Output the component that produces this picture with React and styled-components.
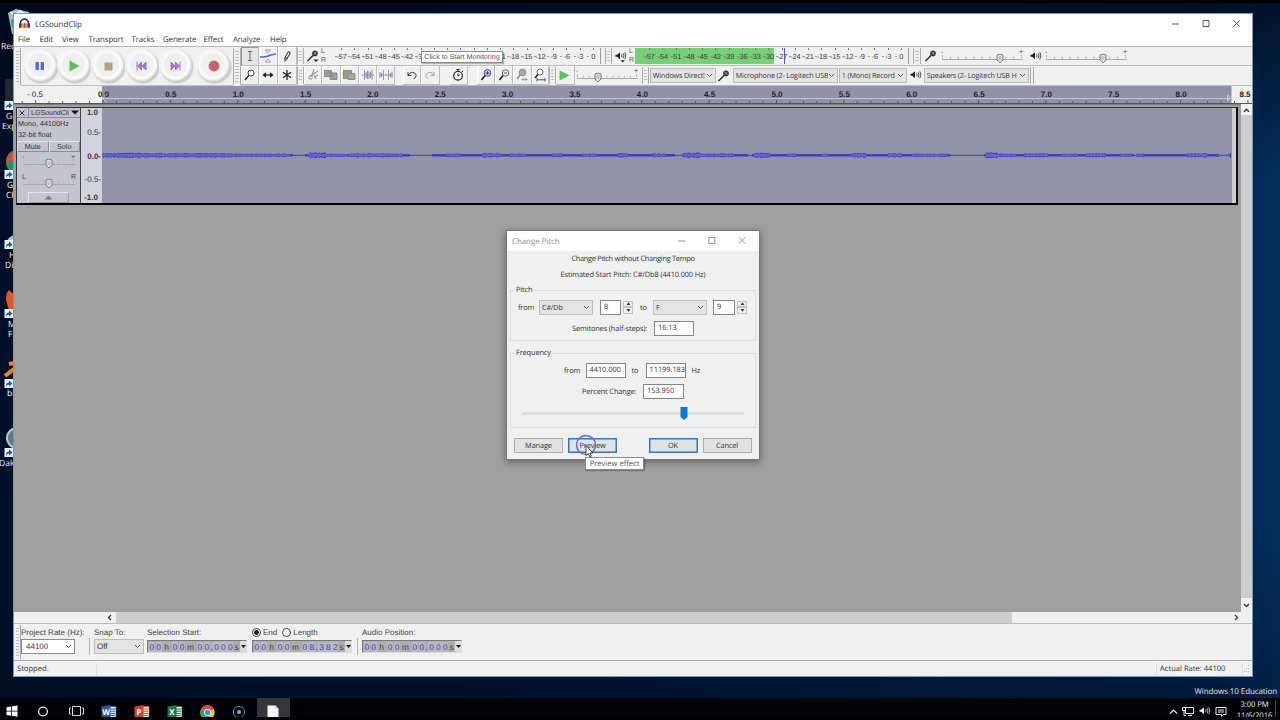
import React from 'react';
import styled, { createGlobalStyle } from 'styled-components';

const GlobalStyle = createGlobalStyle`
	* {
		box-sizing: border-box;
	}

	body {
		margin: 0;
		overflow: hidden;
		background: #000;
		font-family: 'Liberation Sans', Arial, sans-serif;
		font-size: 8px;
		color: #333;
		text-rendering: geometricPrecision;
	}

	svg {
		display: block;
		flex: none;
	}
`;

const ui = `'Open Sans', 'Noto Sans', sans-serif`;

const Desktop = styled.div`
	position: relative;
	width: 1280px;
	height: 720px;
	overflow: hidden;
	padding-top: 3px;
	background: #000;
	display: flex;
	flex-direction: column;
	font-family: ${ui};
`;

const Wallpaper = styled.div`
	flex: 1;
	background: linear-gradient(to bottom, rgba(0, 8, 22, 0.75), transparent 25%, transparent 75%, rgba(0, 8, 22, 0.35)),
		linear-gradient(to right, #001029 0%, #001736 40%, #00224c 95%, #04305f 100%);
`;

const Shortcut = styled.div`
	position: absolute;
	left: ${props => props.$x || 4}px;
	top: ${props => props.$y}px;
	width: 40px;
	color: #f0f0f0;
	font-size: 8.5px;
	line-height: 10px;
	text-align: left;
	white-space: pre;
`;

const Window = styled.div`
	position: absolute;
	left: 13px;
	top: 13px;
	width: 1240px;
	height: 664px;
	display: flex;
	flex-direction: column;
	border: 1px solid #6f9fb8;
	background: #f0f0f0;
`;

const TitleBar = styled.div`
	display: flex;
	align-items: center;
	height: 19px;
	padding-left: 5px;
	background: #fff;
	font-size: 8px;
	color: #333;

	span {
		flex: 1;
		margin-left: 5px;
		padding-top: 1px;
		letter-spacing: -0.1px;
	}
`;

const MenuBar = styled.div`
	display: flex;
	align-items: center;
	height: 14px;
	padding-top: 1px;
	background: #fff;
	font-size: 7.8px;
	letter-spacing: -0.08px;
	color: #333;
	border-bottom: 1px solid #b4b4b4;
`;

const MenuItem = styled.span`
	flex: none;
	width: ${props => props.$w}px;
	padding-left: 4px;
	white-space: nowrap;
`;

const Toolbars = styled.div`
	display: flex;
	height: 39px;
	font-family: 'Liberation Sans', Arial, sans-serif;
`;

const Grip = styled.div`
	flex: none;
	width: ${props => props.$w || 7}px;
	margin: 1px 0;
	border-left: 1px solid ${props => (props.$first ? '#f0f0f0' : '#aaa')};
	border-right: 1px solid #aaa;
	background: repeating-linear-gradient(to bottom, #bbb 0 1px, #f2f2f2 1px 3px) content-box;
	padding: 3px 1px;
`;

const Transport = styled.div`
	display: flex;
	align-items: center;
	width: 212px;
	padding-left: 3px;
	gap: 1.3px;
	border-bottom: 1px solid #c2c2c2;
`;

const RoundButton = styled.div`
	display: flex;
	align-items: center;
	justify-content: center;
	flex: none;
	width: 32.6px;
	height: 32.6px;
	margin-left: ${props => props.$ml || 0}px;
	border-radius: 50%;
	background: radial-gradient(circle at 48% 46%, #efefef 0 42%, #fbfbfb 56%, #eee 63%, #c9c9c9 70%, #eee 78%);
	box-shadow: 1px 1px 2px #b8b8b8, -1px -1px 1px #fafafa;
`;

const ToolGrid = styled.div`
	display: grid;
	grid-template-columns: repeat(3, 1fr);
	width: 56px;
	border-bottom: 1px solid #c2c2c2;
`;

const Tool = styled.div`
	display: flex;
	align-items: center;
	justify-content: center;
	flex: none;
	width: ${props => props.$w || 18.3}px;
	margin-left: ${props => props.$ml || 0}px;
	border-right: 1px solid #bdbdbd;
	border-bottom: 1px solid #bdbdbd;
	background: ${props => (props.$on ? '#e4e4e4' : '#f0f0f0')};
	box-shadow: inset 1px 1px 0 ${props => (props.$on ? '#999' : '#fff')};
`;

const Docks = styled.div`
	flex: 1;
	display: flex;
	flex-direction: column;
`;

const Dock = styled.div`
	position: relative;
	display: flex;
	height: ${props => props.$h}px;
	border-bottom: 1px solid #bcbcbc;
`;

const Slot = styled.div`
	display: flex;
	align-items: center;
	justify-content: center;
	flex: none;
	width: ${props => props.$w}px;
`;

const Channels = styled.div`
	width: 6px;
	padding-top: 1px;
	font-size: 7px;
	line-height: 8.5px;
	color: #555;
`;

const Scale = styled.div`
	display: flex;
	flex: none;
	width: 274px;
	height: 16px;
	margin-top: 1px;
	padding-left: 8px;
	background: linear-gradient(to right, #74d274 ${props => props.$level || 0}px, transparent 0);
	border-right: 1px solid #9a9aa8;
`;

const Mark = styled.span`
	display: flex;
	align-items: center;
	justify-content: center;
	width: 13.42px;
	padding-top: 1px;
	font-size: 7.4px;
	letter-spacing: -0.1px;
	color: #3c3c3c;
	white-space: nowrap;
	background: linear-gradient(#777, #777) 50% 0 / 1px 2px no-repeat,
		linear-gradient(#999, #999) 0 8px / 2px 1px no-repeat;
`;

const PeakLine = styled.i`
	position: absolute;
	left: 487px;
	top: 1px;
	width: 1px;
	height: 16px;
	background: #5554c4;
`;

const Hint = styled.div`
	position: absolute;
	left: ${props => props.$x}px;
	top: ${props => props.$y}px;
	width: ${props => props.$w}px;
	height: ${props => props.$h}px;
	display: flex;
	align-items: center;
	justify-content: center;
	border: 1px solid #8a8a8a;
	background: #fff;
	color: #555;
	white-space: nowrap;
	font-size: ${props => props.$size || 7.1}px;
	font-family: ${props => (props.$ui ? ui : 'inherit')};
	box-shadow: 1px 1px 1px rgba(0, 0, 0, 0.25);
`;

const Combo = styled.div`
	display: flex;
	align-items: center;
	justify-content: space-between;
	flex: none;
	width: ${props => props.$w}px;
	height: ${props => props.$h || 15}px;
	margin-left: ${props => props.$ml || 0}px;
	padding: 0 2px 0 ${props => props.$pad || 2}px;
	border: 1px solid ${props => (props.$white ? '#8c8c8c' : '#bcbcbc')};
	background: ${props => (props.$white ? '#fff' : '#e3e3e3')};
	font-family: ${props => (props.$plain ? 'inherit' : ui)};
	font-size: ${props => props.$size || 7.2}px;
	letter-spacing: ${props => (props.$plain ? 0 : -0.15)}px;
	white-space: nowrap;
	color: #333;

	span {
		overflow: hidden;
		padding-top: ${props => (props.$plain ? 0 : 1)}px;
	}
`;

const Devices = styled.div`
	display: flex;
	align-items: center;
	padding-left: 1px;
`;

const Ruler = styled.div`
	height: 18px;
	background: #efefef;
	border-bottom: 1px solid #555;
`;

const Workspace = styled.div`
	display: flex;
	height: 508px;
	background: #9f9f9f;
`;

const Canvas = styled.div`
	flex: 1;
	padding: 2px 3px 0 2px;
	border-top: 1px solid #808080;
`;

const Track = styled.div`
	display: flex;
	height: 98px;
	border: 1px solid #333;
	border-right: 2px solid #111;
	border-bottom: 2px solid #000;
	background: #cfcfd3;
	font-family: 'Liberation Sans', Arial, sans-serif;
`;

const TrackPanel = styled.div`
	width: 64px;
	background: #c4c4d0;
	border-right: 1px solid #444;
	display: flex;
	flex-direction: column;
	color: #333;
	font-size: 7.2px;
`;

const TrackHead = styled.div`
	display: flex;
	align-items: center;
	height: 10.5px;
	border-bottom: 1px solid #8a8a98;

	span {
		flex: 1;
		padding-left: 2px;
		margin-left: 2px;
		border-left: 1px solid #8a8a98;
		letter-spacing: -0.1px;
	}
`;

const TrackInfo = styled.div`
	height: 22.5px;
	padding: 1px 0 0 1px;
	line-height: 10.7px;
`;

const TrackButtons = styled.div`
	display: grid;
	grid-template-columns: 1fr 1fr;
	height: 10.5px;

	span {
		display: flex;
		align-items: center;
		justify-content: center;
		border: 1px solid;
		border-color: #e4e4ee #8a8a98 #8a8a98 #e4e4ee;
	}
`;

const TrackSliders = styled.div`
	padding: 2px 0 0 5px;
`;

const Collapse = styled.div`
	display: flex;
	align-items: center;
	justify-content: center;
	width: 41px;
	height: 11px;
	margin: 0 auto;
	border: 1px solid;
	border-color: #e4e4ee #9a9aa8 #9a9aa8 #e4e4ee;
`;

const VerticalRuler = styled.div`
	display: flex;
	flex-direction: column;
	justify-content: space-between;
	align-items: flex-end;
	width: 21px;
	padding: 0 1px 1px 0;
	background: #d3d3dd;
	font-size: 8px;
	line-height: 9px;
	color: #333;

	b:first-child,
	b:last-child {
		margin-right: 3px;
	}

	span:nth-child(2) {
		margin-top: -4px;
	}

	span:nth-child(4) {
		margin-bottom: -6px;
	}
`;

const Wave = styled.div`
	width: 1130px;
	background: #9292aa;
`;

const VScroll = styled.div`
	width: 11px;
	display: flex;
	flex-direction: column;
	align-items: center;
	justify-content: space-between;
	background: linear-gradient(#cdcdcd, #cdcdcd) 0 11px / 11px 483px no-repeat #f0f0f0;
	padding: 4px 0;
`;

const HScroll = styled.div`
	display: flex;
	align-items: center;
	height: 11px;
	padding-left: 93px;
	background: #f0f0f0;
`;

const Thumb = styled.div`
	width: 896px;
	height: 11px;
	margin: 0 222px 0 4px;
	background: #cdcdcd;
`;

const SelectionBar = styled.div`
	display: flex;
	height: 38px;
	border-top: 1px solid #bbb;
	border-bottom: 1px solid #aaa;
	font-family: 'Liberation Sans', Arial, sans-serif;
	font-size: 8px;
`;

const Field = styled.div`
	flex: none;
	width: ${props => props.$w}px;
	margin-left: ${props => props.$ml || 0}px;
	padding-top: 2px;
`;

const FieldLabel = styled.div`
	display: flex;
	align-items: center;
	height: 13px;
	white-space: nowrap;
	color: #444;
`;

const Divider = styled.div`
	width: 1px;
	height: 17px;
	margin: 14px 0 0 ${props => props.$ml}px;
	background: #b4b4b4;
`;

const Radio = styled.i`
	flex: none;
	width: 9px;
	height: 9px;
	margin: 0 2px 0 ${props => props.$ml || 0}px;
	border: 1px solid #444;
	border-radius: 50%;
	background: ${props => (props.$on ? 'radial-gradient(#222 0 2px, #fff 2.8px)' : '#fff')};
`;

const TimeBox = styled.div`
	display: flex;
	align-items: center;
	height: 13px;
	margin-top: 1px;
	border: 1px solid;
	border-color: #777 #ddd #ddd #777;
	background: #adadb0;
	font-size: 8.4px;
	color: #444;

	b {
		flex: none;
		width: 6.2px;
		margin-left: 0.7px;
		height: 10px;
		line-height: 11px;
		background: #b9b9c0;
		color: #3a36c8;
		text-align: center;
		font-weight: 400;
	}

	em {
		width: 3.4px;
		text-align: center;
		color: #3a36c8;
		font-style: normal;
	}
`;

const TimeUnit = styled.span`
	flex: none;
	width: ${props => props.$w}px;
	text-align: center;
`;

const TimeArrow = styled.div`
	display: flex;
	align-items: center;
	justify-content: center;
	flex: none;
	width: 6px;
	height: 11px;
	margin-left: auto;
	background: #ddd;
`;

const StatusBar = styled.div`
	display: flex;
	align-items: center;
	flex: 1;
	font-size: 7.6px;
	padding-left: 3px;
`;

const StatusCell = styled.div`
	width: ${props => props.$w}px;
	height: 12px;
	line-height: 13px;
	padding-left: ${props => props.$pad || 0}px;
	border-right: 1px solid #ddd;
`;

const Dialog = styled.div`
	position: absolute;
	left: 506px;
	top: 230px;
	width: 254px;
	height: 230px;
	border: 1px solid #777;
	background: #f0f0f0;
	box-shadow: 0 2px 7px rgba(0, 0, 0, 0.4);
	font-size: 7.4px;
	letter-spacing: -0.13px;
	color: #333;
`;

const DialogTitle = styled.div`
	display: flex;
	align-items: center;
	height: 20px;
	padding-left: 5px;
	background: #fff;
	color: #8c8c8c;
	font-size: 8px;
	letter-spacing: -0.1px;

	span {
		flex: 1;
	}
`;

const DialogIntro = styled.div`
	padding-top: 1px;
	text-align: center;
	line-height: 15.5px;
	white-space: nowrap;
`;

const DialogText = styled.div`
	height: 15.5px;
	letter-spacing: ${props => (props.$tight ? -0.29 : -0.13)}px;
`;

const Group = styled.div`
	height: ${props => props.$h}px;
	margin: ${props => props.$mt}px 3px 0;
	border: 1px solid #dcdcdc;
`;

const Legend = styled.div`
	width: max-content;
	height: 10px;
	margin: -6px 0 0 3px;
	padding: 0 2px;
	line-height: 11px;
	background: #f0f0f0;
`;

const Row = styled.div`
	display: flex;
	align-items: center;
	height: 16px;
	margin-top: ${props => props.$mt || 0}px;
	padding-left: ${props => props.$pl || 0}px;
`;

const Label = styled.span`
	flex: none;
	width: ${props => props.$w}px;
	padding-top: 1px;
	white-space: nowrap;
`;

const Input = styled.div`
	flex: none;
	width: ${props => props.$w}px;
	height: 15px;
	padding-left: 3px;
	line-height: 12px;
	border: 1px solid #858585;
	background: #fff;
	overflow: hidden;
	white-space: nowrap;
	letter-spacing: -0.03px;
`;

const Stepper = styled.div`
	display: grid;
	grid-template-rows: 1fr 1fr;
	flex: none;
	width: 10px;
	height: 13px;
	margin: 0 ${props => props.$mr || 0}px 0 2px;

	span {
		display: flex;
		align-items: center;
		justify-content: center;
		border: 1px solid #c2c2c2;
	}
`;

const PitchSlider = styled.div`
	display: flex;
	align-items: center;
	height: 14px;
	margin: 7px 11px 0;
	padding-left: 158px;
	background: linear-gradient(#dedede, #dedede) 0 6px / 100% 3px no-repeat;
`;

const Actions = styled.div`
	display: flex;
	margin: 10px 0 0 7px;
`;

const Button = styled.div`
	display: flex;
	align-items: center;
	justify-content: center;
	width: 49px;
	height: 15px;
	margin-right: ${props => props.$mr || 0}px;
	border: 1px solid ${props => (props.$focus ? '#2b7ac4' : '#adadad')};
	box-shadow: inset 0 0 0 0.5px ${props => (props.$focus ? '#2b7ac4' : 'transparent')};
	background: #e2e2e2;
	font-size: 7.4px;
`;

const Pointer = styled.svg`
	position: absolute;
	left: 574px;
	top: 433px;
`;

const Watermark = styled.div`
	position: absolute;
	right: 3px;
	top: 686px;
	color: #e6e6e6;
	font-size: 8px;
	letter-spacing: -0.1px;
	line-height: 12px;
`;

const Taskbar = styled.div`
	display: flex;
	align-items: center;
	height: 19px;
	margin-bottom: 3px;
	background: #010307;
	overflow: hidden;
`;

const TaskItem = styled.div`
	display: flex;
	justify-content: center;
	flex: none;
	width: ${props => props.$w || 32.8}px;
	height: 19px;
	padding-top: 6.5px;
	background: ${props => (props.$on ? '#33363b' : 'none')};
`;

const Tray = styled.div`
	display: flex;
	align-items: center;
	gap: 4px;
	margin-left: auto;
	padding-top: 8px;
`;

const Clock = styled.div`
	width: 42px;
	height: 19px;
	margin: -4px 4px 0 3px;
	border-right: 1px solid #444;
	overflow: hidden;
	color: #eee;
	text-align: center;
	font-size: 7.7px;
	letter-spacing: -0.1px;
	line-height: 11px;
	white-space: nowrap;
`;

const Chevron = ({ d = 'M1 1l2.5 2.5L6 1', w = 7, h = 5, color = '#555', sw = 1 }) => (
	<svg width={w} height={h} fill="none" stroke={color} strokeWidth={sw}>
		<path d={d} />
	</svg>
);

const Mic = ({ arrow }) => (
	<svg width="14" height="14" viewBox="0 0 14 14">
		<path d="M1.5 12l6-6" stroke="#333" strokeWidth="1.6" />
		<circle cx="9" cy="4.4" r="2.8" fill="#333" />
		<path d="M7.6 3.2l3 2.6M8 5.5l2.5-2.8" stroke="#ccc" strokeWidth="0.7" />
		{arrow && <path d="M7.5 10.5h5L10 13z" fill="#222" />}
	</svg>
);

const Speaker = ({ arrow, color = '#222' }) => (
	<svg width="13" height="13" viewBox="0 0 13 13" fill="none" stroke={color}>
		<path d="M1.5 4.8h1.6L6 2.3v7L3.1 6.8H1.5z" fill={color} stroke="none" />
		<path d="M7.5 4.3q1 1.5 0 3M9.2 3.3q1.6 2.5 0 5M10.8 2.3q2.2 3.5 0 7" strokeWidth="0.8" />
		{arrow && <path d="M6.5 10.3h4.4L8.7 12.6z" fill="#222" stroke="none" />}
	</svg>
);

const Slider = ({ width, value, h = 17, left = '-', right = '+' }) => (
	<svg width={width + 2} height={h} fontSize="7" fill="#444">
		{Array.from({ length: 11 }, (_, i) => (
			<path key={i} d={`M${1.5 + (i * (width - 3)) / 10} ${i % 10 ? 8.5 : 7}v3`} stroke="#bbb" />
		))}
		<path d={`M1 11.5H${width}`} stroke="#aaa" />
		<text x="0" y="6">{left}</text>
		<text x={width - 4} y="6">{right}</text>
		<path
			d={`M${value - 3} 7q3-1.8 6 0v5l-3 3-3-3z`}
			fill="#dcdcea"
			stroke="#666"
			strokeWidth="0.8"
		/>
		<path d={`M${value - 1.5} 9h3M${value - 1.5} 11h3`} stroke="#999" strokeWidth="0.7" />
	</svg>
);

const icons = {
	ibeam: <path d="M5 2.5h4M7 2.5v9M5 11.5h4" stroke="#666" />,
	envelope: (
		<>
			<path d="M4.5 1h5L7 4.2zM4.5 13h5L7 9.8z" strokeWidth="0.6" stroke="#777" />
			<path d="M-1 8q6 0 8-1t8-2" stroke="#5a66d8" strokeWidth="1.7" />
		</>
	),
	pencil: <path d="M5 11.5V8.5l3.4-6 2 1.2-3.4 6zM5.5 8.5l2 1M5 11.5v1" />,
	zoom: (
		<>
			<circle cx="8" cy="5" r="3" fill="#fafafa" strokeWidth="0.8" />
			<path d="M5.8 7.4L2 12" strokeWidth="1.4" />
		</>
	),
	shift: (
		<>
			<path d="M3 7h8" strokeWidth="1.3" />
			<path d="M5 4.2L1.4 7 5 9.8zM9 4.2L12.6 7 9 9.8z" fill="#222" stroke="none" />
		</>
	),
	multi: <path d="M7 2v10M3 4.3l8 5.4M3 9.7l8-5.4" strokeWidth="1.3" />,
	cut: (
		<g stroke="#888">
			<path d="M8 1L6 8M12 3L4 8" />
			<circle cx="4.5" cy="9.5" r="1.7" />
			<path d="M8 7l2 4M9 9l3-2" />
		</g>
	),
	copy: <path d="M0.5 2.5h7v6h-7zM6 5h7v6.5H6z" fill="#9c9ca4" stroke="#888" />,
	paste: (
		<>
			<path d="M1.5 2.5h8v8h-8z" fill="#9c9c84" stroke="#888870" />
			<path d="M6 5.5h7v6H6z" fill="#a8a8b0" stroke="#888" />
		</>
	),
	trim: (
		<g stroke="#8a8ab4">
			<path d="M1 7h12M5 4v6M6.5 3v8M8 3v8M9.5 4v6" />
			<path d="M3.5 2v10M11 2v10" stroke="#999" />
		</g>
	),
	silence: (
		<g stroke="#8a8ab4">
			<path d="M1 4v6M2.5 5v4M5 7h4M11.5 5v4M13 4v6M0 7h4M10 7h4" />
			<path d="M4.5 2v10M9.5 2v10" stroke="#999" />
		</g>
	),
	undo: <path d="M3 4v3.5h3.5M3.2 7.2Q6 3 9.5 5T9 11" strokeWidth="0.9" />,
	redo: <path d="M11 4v3.5H7.5M10.8 7.2Q8 3 4.5 5T5 11" stroke="#999" strokeWidth="0.9" />,
	timer: (
		<>
			<circle cx="7" cy="7.8" r="4.3" fill="#fff" strokeWidth="1.2" />
			<path d="M7 5.3v2.6l1.8-1M5.5 1.5h3M7 1.5v2M11 3l1 1" />
		</>
	),
	zoomIn: (
		<>
			<circle cx="8.5" cy="5" r="3.4" fill="#c8c8e8" strokeWidth="0.7" />
			<path d="M6.7 5h3.6M8.5 3.2v3.6" stroke="#3333aa" />
			<path d="M6 7.4L2.5 12" strokeWidth="1.6" />
		</>
	),
	zoomOut: (
		<>
			<circle cx="8.5" cy="5" r="3.2" fill="#fff" strokeWidth="0.7" />
			<path d="M6.7 5h3.6" stroke="#555" />
			<path d="M6 7.4L2.5 12" strokeWidth="1.6" />
		</>
	),
	zoomSel: (
		<g stroke="#8a8a8a">
			<circle cx="7.5" cy="4.5" r="3.3" fill="#aaa" />
			<path d="M5 7L2 11" strokeWidth="1.6" />
			<path d="M6.5 11.5h6M8 10v3M11 10v3" strokeWidth="0.8" />
		</g>
	),
	zoomFit: (
		<>
			<circle cx="7" cy="4" r="3" fill="#fff" strokeWidth="0.7" />
			<path d="M4.8 6.4L2 10" strokeWidth="1.6" />
			<path d="M4 11.8h8M4 10v3.5M12 10v3.5" stroke="#4a4a88" />
		</>
	)
};

const Icon = ({ name }) => (
	<svg width="14" height="14" viewBox="0 0 14 14" fill="none" stroke="#222" overflow="visible">
		{icons[name]}
	</svg>
);

const WindowControls = ({ color = '#444', gap = 26, right = 12 }) => (
	<svg width={gap * 2 + 18 + right} height="12" fill="none" stroke={color} strokeWidth="0.9">
		<path d="M4 6h7" />
		<path d={`M${gap + 4.5} 2.5h6v6h-6z`} />
		<path d={`M${gap * 2 + 4.5} 2.3l6.3 6.3M${gap * 2 + 10.8} 2.3l-6.3 6.3`} />
	</svg>
);

const marks = Array.from({ length: 20 }, (_, i) => (i === 19 ? '0' : `-${57 - i * 3}`));

const Meter = ({ level }) => (
	<Scale $level={level}>
		{marks.map(mark => (
			<Mark key={mark}>{mark}</Mark>
		))}
	</Scale>
);

const second = 134.7;

const TimeRuler = () => (
	<svg width="1238" height="17" fontFamily="Liberation Sans" fontSize="8" fill="#222" fontWeight="bold">
		<rect x="88" width="1129.5" height="17" fill="#9191aa" />
		<path d="M88 12.5h1128" stroke="#c3c3ce" />
		{Array.from({ length: 94 }, (_, i) => {
			const x = 89 + ((i - 6) * second) / 10;
			return <path key={i} d={`M${x} ${(i - 1) % 5 ? 15 : 14}V17`} stroke="#444" strokeWidth="0.8" />;
		})}
		{Array.from({ length: 19 }, (_, i) => {
			const value = (i - 1) / 2;
			const x = value === 8.5 ? 1231 : 89.5 + value * second;
			return (
				<text key={i} x={value < 0 ? 21 : x} y="10.7" textAnchor="middle" fontWeight={value < 0 ? 400 : 700}>
					{value < 0 ? '- 0.5' : value.toFixed(1)}
				</text>
			);
		})}
		<path d="M92 8.5l-3.5 3.5 3.5 4M1213.5 9l3 3-3 3z" fill="none" stroke="#ddd" strokeWidth="0.8" />
	</svg>
);

// start, end, half height of each loud stretch of the clip
const bursts = [
	[0, 60, 2.4], [60, 130, 2.1], [130, 188, 1.7], [207, 224, 2.8], [224, 245, 1.6], [246, 262, 2], [262, 300, 2],
	[345, 358, 2], [380, 400, 2.1], [408, 424, 1.8], [450, 460, 1.9], [481, 494, 1.8], [516, 526, 2.1],
	[551, 563, 1.9], [581, 598, 2.6], [598, 632, 1.8], [652, 668, 2.4], [685, 694, 1.9], [720, 726, 1.8],
	[750, 765, 2.3], [786, 800, 2.1], [810, 845, 1.7], [884, 896, 2.8], [896, 914, 1.6], [922, 946, 2],
	[960, 976, 1.7], [984, 1003, 2.1], [1018, 1030, 1.6], [1032, 1042, 1.9], [1085, 1105, 2.1], [1115, 1128, 1.7]
];

const quiet = [[190, 203], [307, 330], [572, 580], [645, 650], [847, 882], [1031, 1034], [1116, 1126]];

const amplitude = x => {
	if (quiet.some(([from, to]) => x > from && x < to)) {
		return 0.4;
	}
	const burst = bursts.find(([from, to]) => x >= from && x < to);
	return burst ? burst[2] : 1.2;
};

const noise = x => Math.abs(Math.sin(x * 12.9898) * 43758.5453) % 1;

const middle = 47.3;

const Waveform = () => {
	let peaks = '';
	let rms = '';
	for (let x = 0; x < 1129; x++) {
		const a = amplitude(x);
		const h = a > 1.3 ? a * (0.65 + noise(x) * 0.45) : a;
		peaks += `M${x + 0.5} ${middle - h}V${middle + h}`;
		if (a > 1.5) {
			rms += `M${x + 0.5} ${middle - h * 0.6}V${middle + h * 0.6}`;
		}
	}
	return (
		<svg width="1130" height="95">
			<path d={`M0 ${middle}h1129`} stroke="#6f6cc8" strokeWidth="0.8" />
			<path d={peaks} stroke="#3f3ac0" />
			<path d={rms} stroke="#6661d6" />
			<path d="M1128.5 45v5" stroke="#3f3ac0" />
		</svg>
	);
};

const Time = ({ seconds }) => (
	<TimeBox>
		<b>0</b>
		<b>0</b>
		<TimeUnit $w={9.6}>h</TimeUnit>
		<b>0</b>
		<b>0</b>
		<TimeUnit $w={11}>m</TimeUnit>
		{seconds.split('').map((c, i) => (c === '.' ? <em key={i}>.</em> : <b key={i}>{c}</b>))}
		<TimeUnit $w={6.6}>s</TimeUnit>
		<TimeArrow>
			<svg width="5" height="3">
				<path d="M0 0h5L2.5 3z" fill="#111" />
			</svg>
		</TimeArrow>
	</TimeBox>
);

const Spin = ({ mr }) => (
	<Stepper $mr={mr}>
		<span>
			<svg width="5" height="3">
				<path d="M0.5 3h4L2.5 0.3z" fill="#333" />
			</svg>
		</span>
		<span>
			<svg width="5" height="3">
				<path d="M0.5 0h4L2.5 2.7z" fill="#333" />
			</svg>
		</span>
	</Stepper>
);

const Office = ({ letter, color }) => (
	<svg width="16" height="14" viewBox="0 0 16 14">
		<path d="M8 1.5h7v11H8z" fill="#f3f3f3" stroke={color} strokeWidth="0.8" />
		<path d="M9 4h5M9 6.2h5M9 8.4h5M9 10.6h5" stroke={color} />
		<path d="M0.5 1.5L9.5 0v14L0.5 12.5z" fill={color} />
		<text x="5" y="10" fontSize="8" fontWeight="bold" fill="#fff" textAnchor="middle">
			{letter}
		</text>
	</svg>
);

const LinkArrow = ({ y, children }) => (
	<g>
		{children}
		<rect x="4.5" y={y} width="9" height="9" fill="#e8eef4" />
		<path d={`M6 ${y + 7.5}q0-4 3-4v-2l3.5 3-3.5 3v-2q-2 0-3 2z`} fill="#1d5b9c" />
	</g>
);

const DesktopArt = styled.svg`
	position: absolute;
	left: 0;
	top: 0;
`;

const DesktopIcons = () => (
	<>
		<DesktopArt width="32" height="470">
			<path d="M8 13l8-4 13 3-2 22H12z" fill="#a9bdc9" />
			<path d="M10 12l5 3 5-4 5 3" stroke="#eef4f8" fill="none" strokeWidth="2" />
			<path d="M11 20l4-2v8l-3 2z" fill="#2f81c7" />
			<LinkArrow y={101}>
				<rect x="5" y="79" width="10" height="22" fill="#24272b" />
			</LinkArrow>
			<LinkArrow y={170}>
				<circle cx="19" cy="162" r="13" fill="#29945a" />
				<path d="M6 162a13 13 0 0 1 8-11l3 9z" fill="#d84a3e" />
			</LinkArrow>
			<LinkArrow y={240}>
				<path d="M7 241q2-5 8-6v6z" fill="#b6bfc4" />
			</LinkArrow>
			<LinkArrow y={309}>
				<path d="M6 300q0-8 3-10l3 3 4-2v20H9z" fill="#dc5a2c" />
			</LinkArrow>
			<LinkArrow y={379}>
				<path d="M5 376l9-7M9 364l5-1" stroke="#ec8424" strokeWidth="4" />
			</LinkArrow>
			<LinkArrow y={448}>
				<circle cx="17" cy="438" r="10" fill="#587a8c" stroke="#b8c8c8" strokeWidth="2" />
			</LinkArrow>
		</DesktopArt>
		<Shortcut $x={1} $y={42}>Recycle</Shortcut>
		<Shortcut $x={6} $y={112}>Go Pro</Shortcut>
		<Shortcut $x={2} $y={122}>Express</Shortcut>
		<Shortcut $x={7} $y={181}>Google</Shortcut>
		<Shortcut $x={6} $y={191}>Chrome</Shortcut>
		<Shortcut $x={9} $y={251}>HP</Shortcut>
		<Shortcut $x={5} $y={261}>Disc</Shortcut>
		<Shortcut $x={8} $y={320}>Moz</Shortcut>
		<Shortcut $x={8} $y={330}>Firefox</Shortcut>
		<Shortcut $x={7} $y={389}>blender</Shortcut>
		<Shortcut $x={-1} $y={459}>Daks</Shortcut>
	</>
);

const menus = [
	['File', 21.5], ['Edit', 22.5], ['View', 26.5], ['Transport', 43], ['Tracks', 31.5], ['Generate', 40.5],
	['Effect', 29.5], ['Analyze', 37], ['Help', 30]
];

const ChangePitch = () => (
	<Dialog>
		<DialogTitle>
			<span>Change Pitch</span>
			<WindowControls color="#888" gap={30.3} right={6} />
		</DialogTitle>
		<DialogIntro>
			<DialogText $tight>Change Pitch without Changing Tempo</DialogText>
			<DialogText>Estimated Start Pitch: C#/Db8 (4410.000 Hz)</DialogText>
		</DialogIntro>
		<Group $h={51} $mt={7}>
			<Legend>Pitch</Legend>
			<Row $mt={4} $pl={7}>
				<Label $w={21}>from</Label>
				<Combo $w={54}><span>C#/Db</span><Chevron /></Combo>
				<Label $w={7} />
				<Input $w={21}>8</Input>
				<Spin mr={7} />
				<Label $w={13}>to</Label>
				<Combo $w={54}><span>F</span><Chevron /></Combo>
				<Label $w={6} />
				<Input $w={22}>9</Input>
				<Spin />
			</Row>
			<Row $mt={5} $pl={61}>
				<Label $w={82}>Semitones (half-steps):</Label>
				<Input $w={40}>16.13</Input>
			</Row>
		</Group>
		<Group $h={75} $mt={12}>
			<Legend>Frequency</Legend>
			<Row $mt={4} $pl={53}>
				<Label $w={21.5}>from</Label>
				<Input $w={40}>4410.000</Input>
				<Label $w={6} />
				<Label $w={14}>to</Label>
				<Input $w={40}>11199.183</Input>
				<Label $w={6} />
				<Label $w={12}>Hz</Label>
			</Row>
			<Row $mt={5} $pl={71}>
				<Label $w={61}>Percent Change:</Label>
				<Input $w={41}>153.950</Input>
			</Row>
			<PitchSlider>
				<svg width="8" height="13">
					<path d="M0.5 0h7v10L4 13 0.5 10z" fill="#0d78d2" />
				</svg>
			</PitchSlider>
		</Group>
		<Actions>
			<Button $mr={5}>Manage</Button>
			<Button $mr={31.5} $focus>Preview</Button>
			<Button $mr={5} $focus>OK</Button>
			<Button>Cancel</Button>
		</Actions>
	</Dialog>
);

const App = () => (
	<Desktop>
		<GlobalStyle />
		<Wallpaper />
		<DesktopIcons />
		<Window>
			<TitleBar>
				<svg width="11" height="11" viewBox="0 0 9 9">
					<path d="M1.2 6V4.2a3.3 3.3 0 0 1 6.6 0V6" fill="none" stroke="#2b2b6e" strokeWidth="1.3" />
					<path d="M2 4.5h5V8H2z" fill="#f29a1f" />
					<path d="M0 4.5h2V8H0zM7 4.5h2V8H7z" fill="#333377" />
					<path d="M4.5 4v4" stroke="#d43c1c" />
				</svg>
				<span>LGSoundClip</span>
				<WindowControls gap={30.5} right={5} />
			</TitleBar>
			<MenuBar>
				{menus.map(([name, width]) => (
					<MenuItem key={name} $w={width}>{name}</MenuItem>
				))}
			</MenuBar>
			<Toolbars>
				<Grip $first />
				<Transport>
					<RoundButton>
						<svg width="10" height="10"><path d="M0.5 1h3.4v8H0.5zM5.6 1H9v8H5.6z" fill="#5468dc" /></svg>
					</RoundButton>
					<RoundButton>
						<svg width="11" height="12"><path d="M0.5 0.5L10.5 6 0.5 11.5z" fill="#54c454" /></svg>
					</RoundButton>
					<RoundButton>
						<svg width="9" height="9"><path d="M0.5 0.5h8v8h-8z" fill="#b5a47c" /></svg>
					</RoundButton>
					<RoundButton>
						<svg width="11" height="10"><path d="M1 0.5v9M1.5 5l4-4v8zM6 5l4-4v8z" fill="#a080cc" stroke="#8e6cc2" strokeWidth="0.9" /></svg>
					</RoundButton>
					<RoundButton>
						<svg width="11" height="10"><path d="M10 0.5v9M9.5 5l-4-4v8zM5 5L1 1v8z" fill="#a080cc" stroke="#8e6cc2" strokeWidth="0.9" /></svg>
					</RoundButton>
					<RoundButton $ml={4}>
						<svg width="12" height="12"><circle cx="6" cy="6" r="5.4" fill="#c46468" /></svg>
					</RoundButton>
				</Transport>
				<Grip $w={8} />
				<ToolGrid>
					{['ibeam', 'envelope', 'pencil', 'zoom', 'shift', 'multi'].map(name => (
						<Tool key={name} $on={name === 'ibeam'}><Icon name={name} /></Tool>
					))}
				</ToolGrid>
				<Docks>
					<Dock $h={19}>
						<Grip />
						<Slot $w={17}><Mic arrow /></Slot>
						<Channels>L<br />R</Channels>
						<Meter />
						<Slot $w={4} />
						<Grip $w={7} />
						<Slot $w={17}><Speaker arrow /></Slot>
						<Channels>L<br />R</Channels>
						<Meter level={139} />
						<PeakLine />
						<Slot $w={4} />
						<Grip $w={8} />
						<Slot $w={20}><Mic /></Slot>
						<Slot $w={84}><Slider width={82} value={59} /></Slot>
						<Slot $w={20}><Speaker /></Slot>
						<Slot $w={84}><Slider width={82} value={58} /></Slot>
						<Hint $x={124} $y={4} $w={82} $h={12}>Click to Start Monitoring</Hint>
					</Dock>
					<Dock $h={20}>
						<Grip />
						{['cut', 'copy', 'paste', 'trim', 'silence'].map(name => (
							<Tool key={name}><Icon name={name} /></Tool>
						))}
						<Tool $ml={7.5}><Icon name="undo" /></Tool>
						<Tool><Icon name="redo" /></Tool>
						<Tool $ml={10}><Icon name="timer" /></Tool>
						<Tool $ml={9}><Icon name="zoomIn" /></Tool>
						<Tool><Icon name="zoomOut" /></Tool>
						<Tool><Icon name="zoomSel" /></Tool>
						<Tool $w={17}><Icon name="zoomFit" /></Tool>
						<Grip />
						<Tool $w={19}>
							<svg width="11" height="11"><path d="M0.5 0.5l10 5-10 5z" fill="#54c454" /></svg>
						</Tool>
						<Slot $w={67}><Slider width={62} value={22} /></Slot>
						<Grip />
						<Devices>
							<Combo $w={66}><span>Windows Direct!</span><Chevron /></Combo>
							<Slot $w={17}><Mic /></Slot>
							<Combo $w={105}><span>Microphone (2- Logitech USB</span><Chevron /></Combo>
							<Combo $w={68} $ml={1}><span>1 (Mono) Record</span><Chevron /></Combo>
							<Slot $w={17}><Speaker /></Slot>
							<Combo $w={105}><span>Speakers (2- Logitech USB H</span><Chevron /></Combo>
						</Devices>
						<Slot $w={1} />
						<Grip $w={3} />
					</Dock>
				</Docks>
			</Toolbars>
			<Ruler>
				<TimeRuler />
			</Ruler>
			<Workspace>
				<Canvas>
					<Track>
						<TrackPanel>
							<TrackHead>
								<svg width="9" height="8"><path d="M2.5 1.5l5 5M7.5 1.5l-5 5" stroke="#222" strokeWidth="0.9" /></svg>
								<span>LGSoundCli</span>
								<svg width="12" height="5"><path d="M2 0.5h8L6 4.5z" fill="#111" /></svg>
							</TrackHead>
							<TrackInfo>
								Mono, 44100Hz
								<br />
								32-bit float
							</TrackInfo>
							<TrackButtons>
								<span>Mute</span>
								<span>Solo</span>
							</TrackButtons>
							<TrackSliders>
								<Slider width={53} value={27} h={20} />
								<Slider width={53} value={27} h={19} left="L" right="R" />
							</TrackSliders>
							<Collapse>
								<svg width="9" height="5"><path d="M0.5 4.5h8L4.5 0.5z" fill="#777" /></svg>
							</Collapse>
						</TrackPanel>
						<VerticalRuler>
							<b>1.0</b>
							<span>0.5-</span>
							<b>0.0-</b>
							<span>-0.5-</span>
							<b>-1.0</b>
						</VerticalRuler>
						<Wave>
							<Waveform />
						</Wave>
					</Track>
				</Canvas>
				<VScroll>
					<Chevron d="M1 3.7l2.5-2.5L6 3.7" color="#333" sw={1.3} />
					<Chevron color="#333" sw={1.3} />
				</VScroll>
			</Workspace>
			<HScroll>
				<Chevron d="M4 1L1.5 3.5 4 6" w={5} h={7} color="#333" sw={1.2} />
				<Thumb />
				<Chevron d="M1 1l2.5 2.5L1 6" w={5} h={7} color="#333" sw={1.2} />
			</HScroll>
			<SelectionBar>
				<Grip $first />
				<Field $w={67}>
					<FieldLabel>Project Rate (Hz):</FieldLabel>
					<Combo $w={54} $white $plain $pad={4} $size={8}><span>44100</span><Chevron /></Combo>
				</Field>
				<Divider $ml={1} />
				<Field $w={53} $ml={4}>
					<FieldLabel>Snap To:</FieldLabel>
					<Combo $w={50} $plain $size={8}><span>Off</span><Chevron /></Combo>
				</Field>
				<Field $w={100}>
					<FieldLabel>Selection Start:</FieldLabel>
					<Time seconds="00.000" />
				</Field>
				<Field $w={100} $ml={5}>
					<FieldLabel>
						<Radio $on />
						End
						<Radio $ml={5} />
						Length
					</FieldLabel>
					<Time seconds="08.382" />
				</Field>
				<Divider $ml={5} />
				<Field $w={100} $ml={4}>
					<FieldLabel>Audio Position:</FieldLabel>
					<Time seconds="00.000" />
				</Field>
			</SelectionBar>
			<StatusBar>
				<StatusCell $w={80}>Stopped.</StatusCell>
				<StatusCell $w={1060} />
				<StatusCell $w={86} $pad={3}>Actual Rate: 44100</StatusCell>
				<svg width="8" height="8" fill="#b8b8b8">
					<path d="M5 0h1v1H5zM3 3h1v1H3zM5 3h1v1H5zM1 6h1v1H1zM3 6h1v1H3zM5 6h1v1H5z" />
				</svg>
			</StatusBar>
		</Window>
		<ChangePitch />
		<Hint $ui $x={585} $y={457} $w={59} $h={13} $size={7.6}>Preview effect</Hint>
		<Pointer width="24" height="26" fill="none">
			<circle cx="12" cy="12" r="9.5" stroke="#6868cc" strokeWidth="1.4" />
			<path d="M12 12.5v10l2.3-2 1.5 3.3 1.5-.7-1.5-3.2h3z" fill="#fff" stroke="#222" strokeWidth="0.8" />
		</Pointer>
		<Watermark>Windows 10 Education</Watermark>
		<Taskbar>
			<TaskItem $w={24}>
				<svg width="12" height="12" fill="#fff">
					<path d="M0.5 2.2L5.2 1.4v4.3H0.5zM6 1.3L11.5 0.5v5.2H6zM0.5 6.4h4.7v4.3L0.5 10zM6 6.4h5.5v5.3L6 10.8z" />
				</svg>
			</TaskItem>
			<TaskItem $w={38}>
				<svg width="12" height="12"><circle cx="6" cy="6.5" r="4.4" fill="none" stroke="#eee" strokeWidth="1.3" /></svg>
			</TaskItem>
			<TaskItem $w={28}>
				<svg width="15" height="12" fill="none" stroke="#ddd"><path d="M3.5 1.5h8v9h-8zM2 3H0.5v6H2M13 3h1.5v6H13" /></svg>
			</TaskItem>
			<TaskItem $w={38}><Office letter="W" color="#2b5aa0" /></TaskItem>
			<TaskItem $w={28}><Office letter="P" color="#d0432a" /></TaskItem>
			<TaskItem $w={38}><Office letter="X" color="#217346" /></TaskItem>
			<TaskItem $w={27}>
				<svg width="15" height="15" viewBox="0 0 15 15">
					<circle cx="7.5" cy="7.5" r="7.2" fill="#f5c534" />
					<path d="M7.5 7.5L1.2 3.9a7.2 7.2 0 0 1 12.5 0z" fill="#dc4b3c" />
					<path d="M7.5 7.5L1.2 3.9A7.2 7.2 0 0 0 7 14.7l3-5z" fill="#33a457" />
					<circle cx="7.5" cy="7.5" r="3.4" fill="#fff" />
					<circle cx="7.5" cy="7.5" r="2.7" fill="#4587ee" />
				</svg>
			</TaskItem>
			<TaskItem $w={36}>
				<svg width="14" height="14"><circle cx="7" cy="7" r="5.6" fill="none" stroke="#5a8799" /><circle cx="7" cy="7" r="2" fill="#7ab0c4" /></svg>
			</TaskItem>
			<TaskItem $on>
				<svg width="12" height="14"><path d="M0.5 0.5h8l3 3V14h-11z" fill="#f6f6f6" /><path d="M8.5 0.5v3h3" fill="#bbb" /></svg>
			</TaskItem>
			<Tray>
				<Chevron d="M1 5.5L4.5 2 8 5.5" w={9} h={8} color="#eee" sw={1.2} />
				<svg width="12" height="11" fill="none" stroke="#eee"><path d="M3.5 1.5h8v6h-8zM6 9.5h4M0.5 1.5h3v3h-3zM2 5v4.5h2" /></svg>
				<Speaker color="#eee" />
				<svg width="12" height="12" fill="none" stroke="#eee"><path d="M1 1.5h10v7H8L6.5 10.5V8.5H1zM3 4h6M3 6h6" /></svg>
				<Clock>
					3:00 PM
					<br />
					11/6/2016
				</Clock>
			</Tray>
		</Taskbar>
	</Desktop>
);

export default App;
